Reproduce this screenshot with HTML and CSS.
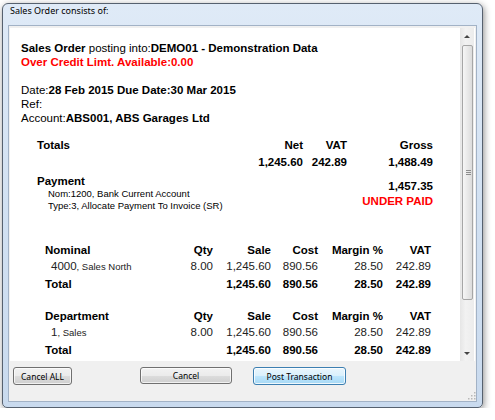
FILE: index.html
```html
<!DOCTYPE html>
<html lang="en">
<head>
  <meta charset="UTF-8" />
  <title>Sales Order consists of:</title>
  <link rel="stylesheet" href="styles.css">
</head>
<body>

  <div class="window">
    <div class="titlebar">Sales Order consists of:</div>

    <div class="client">
      <div class="report">
        <div class="report-body">

          <div class="summary">
            <p><b>Sales Order</b> posting into:<b>DEMO01 - Demonstration Data</b></p>
            <p class="warn"><b>Over Credit Limt. Available:0.00</b></p>
            <p>&nbsp;</p>
            <p>Date:<b>28 Feb 2015 Due Date:30 Mar 2015</b></p>
            <p>Ref:</p>
            <p>Account:<b>ABS001, ABS Garages Ltd</b></p>
          </div>

          <div class="totals">
            <b>Totals</b><b class="r">Net</b><b class="r">VAT</b><b class="r">Gross</b>
            <span></span><b class="r">1,245.60</b><b class="r">242.89</b><b class="r">1,488.49</b>
            <div class="payment">
              <div class="pay-info">
                <b>Payment</b>
                <p class="sub">Nom:1200, Bank Current Account</p>
                <p class="sub">Type:3, Allocate Payment To Invoice (SR)</p>
              </div>
              <div class="pay-due">
                <b>1,457.35</b>
                <b class="warn">UNDER PAID</b>
              </div>
            </div>
          </div>

          <div class="lines first">
            <b>Nominal</b><b class="r">Qty</b><b class="r">Sale</b><b class="r">Cost</b><b class="r">Margin %</b><b class="r">VAT</b>
            <span class="item">4000<small>, Sales North</small></span><span class="r">8.00</span><span class="r">1,245.60</span><span class="r">890.56</span><span class="r">28.50</span><span class="r">242.89</span>
            <b>Total</b><span></span><b class="r">1,245.60</b><b class="r">890.56</b><b class="r">28.50</b><b class="r">242.89</b>
          </div>

          <div class="lines">
            <b>Department</b><b class="r">Qty</b><b class="r">Sale</b><b class="r">Cost</b><b class="r">Margin %</b><b class="r">VAT</b>
            <span class="item">1<small>, Sales</small></span><span class="r">8.00</span><span class="r">1,245.60</span><span class="r">890.56</span><span class="r">28.50</span><span class="r">242.89</span>
            <b>Total</b><span></span><b class="r">1,245.60</b><b class="r">890.56</b><b class="r">28.50</b><b class="r">242.89</b>
          </div>

        </div>

        <!-- vertical scrollbar of the report pane -->
        <div class="scrollbar">
          <div class="arrow up"></div>
          <div class="thumb"></div>
          <div class="arrow down"></div>
        </div>
      </div>

      <div class="buttons">
        <button class="btn cancel-all">Cancel ALL</button>
        <button class="btn cancel">Cancel</button>
        <button class="btn post">Post Transaction</button>
      </div>

      <svg class="grip" width="8" height="8" viewBox="0 0 8 8">
        <g fill="#b8b8b8">
          <rect x="6" y="0" width="1.5" height="1.5"/>
          <rect x="3" y="3" width="1.5" height="1.5"/>
          <rect x="6" y="3" width="1.5" height="1.5"/>
          <rect x="0" y="6" width="1.5" height="1.5"/>
          <rect x="3" y="6" width="1.5" height="1.5"/>
          <rect x="6" y="6" width="1.5" height="1.5"/>
        </g>
      </svg>
    </div>
  </div>

</body>
</html>
```

FILE: styles.css
```css
* { margin: 0; padding: 0; box-sizing: border-box; }
body { background: #fff; font-family: "Liberation Sans", Arial, sans-serif; }

/* Window frame */
.window {
  margin: 3px 0 0 2px;
  width: 481px;
  height: 405px;
  border: 1px solid #56616f;
  border-radius: 6px 6px 5px 5px;
  padding: 0 5px 5px;
  background: linear-gradient(#dfeaf7, #d2e1f2 50%, #c9daee);
  box-shadow: 1px 2px 7px rgba(0, 0, 0, 0.45);
  display: flex;
  flex-direction: column;
}
.titlebar {
  height: 21px;
  line-height: 21px;
  padding-left: 2px;
  font: 9px "Noto Sans", sans-serif;
  color: #000;
}

.client {
  position: relative;
  flex: 1;
  border: 1px solid #a2b2c6;
  background: #f0f0f0;
  display: flex;
  flex-direction: column;
}

/* Report pane */
.report {
  height: 333px;
  margin: 2px 1px 0;
  background: #fff;
  display: flex;
}
.report-body {
  flex: 1;
  overflow: hidden;
  padding: 13px 0 0 11px;
  font-size: 11.5px;
  color: #000;
}
.summary p { line-height: 14px; white-space: nowrap; }
.warn { color: #ff0000; }
.r { text-align: right; }

.totals {
  display: grid;
  grid-template-columns: 1fr 50px 44px 86px;
  width: 396px;
  margin: 12px 0 0 16px;
  line-height: 17px;
}
.payment {
  grid-column: 1 / -1;
  display: flex;
  justify-content: space-between;
  align-items: center;
  margin-top: 3.5px;
}
.pay-info b { display: block; line-height: 13px; }
.pay-info .sub {
  font-size: 9.5px;
  line-height: 12.5px;
  padding-left: 11px;
}
.pay-due { text-align: right; }
.pay-due b { display: block; line-height: 15px; }

.lines {
  display: grid;
  grid-template-columns: 118px 50px 58px 47px 65px 48px;
  width: 386px;
  margin: 15.5px 0 0 24px;
  line-height: 16.5px;
}
.lines.first { margin-top: 29px; }
.lines span { color: #222; }
.lines .item { padding-left: 6px; white-space: nowrap; }
.lines .item small { font-size: 9.5px; }

/* Scrollbar */
.scrollbar {
  width: 14px;
  margin-right: 1px;
  background: linear-gradient(to right, #e6e6e6, #f2f2f2 40%, #ececec);
  display: flex;
  flex-direction: column;
}
.arrow {
  height: 16px;
  display: flex;
  align-items: center;
  justify-content: center;
}
.arrow::before {
  content: "";
  border-left: 3px solid transparent;
  border-right: 3px solid transparent;
}
.arrow.up::before { border-bottom: 3px solid #444; }
.arrow.down { margin-top: auto; }
.arrow.down::before { border-top: 3px solid #444; }
.thumb {
  position: relative;
  height: 255px;
  margin: 1px 1px 0 2px;
  border: 1px solid #a6a6a6;
  border-radius: 2px;
  background: linear-gradient(to right, #f6f6f6, #e9e9e9 50%, #dcdcdc);
}
.thumb::after {
  content: "";
  position: absolute;
  left: 3px;
  top: 50%;
  width: 5px;
  height: 1px;
  margin-top: -3px;
  background: #8d8d8d;
  box-shadow: 0 2px 0 #8d8d8d, 0 4px 0 #8d8d8d;
}

/* Button bar */
.buttons {
  flex: 1;
  display: flex;
  align-items: flex-start;
  padding-top: 6px;
}
.btn {
  height: 18px;
  font: 8.5px "Noto Sans", sans-serif;
  color: #000;
  border: 1px solid #707070;
  border-radius: 3px;
  background: linear-gradient(#f2f2f2, #ebebeb 50%, #dddddd 50%, #cfcfcf);
  box-shadow: inset 0 0 0 1px rgba(255, 255, 255, 0.7);
}
.cancel-all { width: 59px; margin-left: 4px; }
.cancel { width: 92px; margin-left: 68px; height: 17px; }
.post {
  width: 93px;
  margin-left: 21px;
  border-color: #3c7fb1;
  background: linear-gradient(#eaf6fd, #d9f0fc 50%, #bee6fd 50%, #a7d9f5);
  box-shadow: inset 0 0 0 1px rgba(255, 255, 255, 0.8);
}

.grip {
  position: absolute;
  right: 0;
  bottom: 1px;
}
```
